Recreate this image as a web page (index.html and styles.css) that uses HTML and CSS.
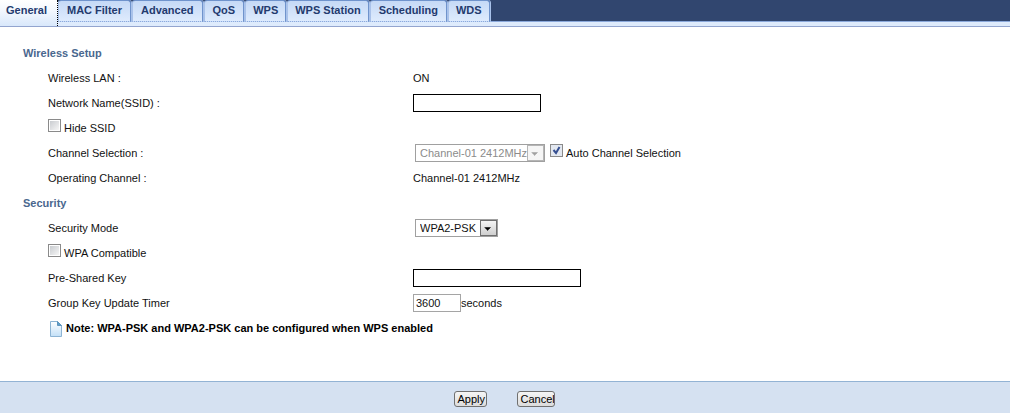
FILE: index.html
```
<!DOCTYPE html>
<html lang="en">
<head>
<meta charset="utf-8">
<title>Wireless LAN - General</title>
<link rel="stylesheet" href="styles.css">
</head>
<body>
<nav class="tabs">
<a class="tab current" href="#general">General</a>
<a class="tab" href="#macfilter">MAC Filter</a>
<a class="tab" href="#advanced">Advanced</a>
<a class="tab" href="#qos">QoS</a>
<a class="tab narrow" href="#wps">WPS</a>
<a class="tab narrow" href="#station">WPS Station</a>
<a class="tab" href="#scheduling">Scheduling</a>
<a class="tab narrow" href="#wds">WDS</a>
</nav>
<form class="page">
<div class="content">
<h2>Wireless Setup</h2>
<div class="row"><span class="name">Wireless LAN :</span><span>ON</span></div>
<div class="row"><label class="name" for="ssid">Network Name(SSID) :</label><input class="text ssid" id="ssid" type="text"></div>
<div class="row"><input class="check" id="hide" type="checkbox"><label for="hide">Hide SSID</label></div>
<div class="row">
<label class="name" for="channel">Channel Selection :</label>
<span class="drop off">
<select class="channel" id="channel" disabled><option>Channel-01 2412MHz</option></select>
<svg class="arrow" width="17" height="16" viewBox="0 0 17 16"><path d="M4 7h7v1h-1v1h-1v1h-1v1h-1v-1h-1v-1h-1v-1h-1z"/></svg>
</span>
<input class="check" id="auto" type="checkbox" checked><label for="auto">Auto Channel Selection</label>
</div>
<div class="row"><span class="name">Operating Channel :</span><span>Channel-01 2412MHz</span></div>
<h2>Security</h2>
<div class="row">
<label class="name" for="mode">Security Mode</label>
<span class="drop">
<select class="mode" id="mode"><option>WPA2-PSK</option></select>
<svg class="arrow" width="17" height="16" viewBox="0 0 17 16"><path d="M4 7h7v1h-1v1h-1v1h-1v1h-1v-1h-1v-1h-1v-1h-1z"/></svg>
</span>
</div>
<div class="row"><input class="check" id="compat" type="checkbox"><label for="compat">WPA Compatible</label></div>
<div class="row"><label class="name" for="key">Pre-Shared Key</label><input class="text key" id="key" type="text"></div>
<div class="row"><label class="name" for="timer">Group Key Update Timer</label><input class="text timer" id="timer" type="text" value="3600"><span>seconds</span></div>
<div class="row note">
<svg width="16" height="16" viewBox="0 0 16 16">
<defs><linearGradient id="paper" x1="0" y1="0" x2="0" y2="1"><stop offset="0" stop-color="#fff"/><stop offset="1" stop-color="#c3e0f7"/></linearGradient></defs>
<path d="M2.5 .5h7l4 4v11h-11z" fill="url(#paper)" stroke="#8db4d4"/>
<path d="M9.5 .5v4h4z" fill="#5f9fcb" stroke="#5f95bd"/>
</svg>
<strong>Note: WPA-PSK and WPA2-PSK can be configured when WPS enabled</strong>
</div>
</div>
<div class="footer">
<button class="btn" type="submit">Apply</button>
<button class="btn cancel" type="reset">Cancel</button>
</div>
</form>
</body>
</html>
```
FILE: styles.css
```
* {box-sizing:border-box}
body {
margin:0;
min-height:100vh;
display:flex;flex-direction:column;
background:#fff;
color:#111;
font:11px/15px "Liberation Sans",Arial,sans-serif;
}
/* tab bar */
.tabs {
display:flex;
height:27px;
background:linear-gradient(#31466f,#31466f 21px,#8ba9dc 21px,#8ba9dc 22px,#deebfc 22px);
border-bottom:1px solid #93a5cf;
}
.tab {
height:22px;
padding:2px 8px 0;
border:1px solid #6f93cc;
border-left-color:#a9c2ea;
border-bottom:1px dotted #8ba9dc;
border-radius:3px 3px 0 0;
box-shadow:1px 0 #a9c2ea;
margin-right:1px;
background:linear-gradient(#c5d9f6,#deebfd);
color:#233a6e;
font-weight:bold;
line-height:14px;
text-decoration:none;
white-space:nowrap;
}
.narrow {padding:2px 7px 0}
.tab.current {
height:26px;
padding:3px 10px 0 6px;
border:0;
border-right:1px dotted #000;
border-radius:0;
box-shadow:none;
margin-right:0;
background:linear-gradient(#fff,#f4f8fe 10px,#d9e8fb);
}
/* form */
.page {
flex:1;
display:flex;flex-direction:column;
}
.content {flex:1;padding:14px 0 0 48px}
h2 {
margin:0 0 0 -25px;
font-size:11px;
line-height:25px;
color:#4a678e;
}
.row {
display:flex;align-items:center;
height:25px;
white-space:nowrap;
}
.name {width:365px}
.text {
height:18px;
margin:0 0 1px;
padding:0 2px;
border:1px solid #000;
border-radius:0;
background:#fff;
color:#111;
font:inherit;
}
.ssid {width:128px}
.key {width:168px}
.timer {width:48px;border-color:#a5a5a5}
.check {
appearance:none;
width:13px;height:13px;
margin:0 3px 6px 0;
border:1px solid #8a8a8a;
background:linear-gradient(135deg,#c9ccd0,#f6f6f6) content-box;
padding:1px;
}
.check:checked {
background:url("data:image/svg+xml,%3Csvg xmlns='http://www.w3.org/2000/svg' viewBox='0 0 13 13'%3E%3Cpath d='M3.5 6l2.5 3L9.500 3' fill='none' stroke='%23354f91' stroke-width='2'/%3E%3C/svg%3E") border-box,#e3e8f0;
}
.drop {
display:flex;
position:relative;
margin:0 5px 1px 2px;
}
.drop select {
appearance:none;
height:18px;
padding:0 17px 0 4px;
border:1px solid #a0a0a0;
border-radius:0;
background:#fff;
color:#111;
font:inherit;
opacity:1;
}
.drop .channel {width:130px;color:#8b8b8b}
.drop .mode {width:83px}
/* drop-down button lies over the select */
.arrow {
position:absolute;
top:1px;right:1px;
border:1px solid #707070;
background:linear-gradient(#f5f5f5,#cfcfcf);
fill:#000;
pointer-events:none;
}
.off .arrow {border-color:#b5b5b5;background:#f5f5f5;fill:#a0a0a0}
.note {gap:2px;color:#000}
/* buttons */
.footer {
display:flex;justify-content:center;
gap:30px;
height:32px;
padding:9px 2px 0 0;
border-top:1px solid #93b3d4;
background:#d5e1f1;
}
.btn {
width:33px;height:16px;
padding:0 0 0 3px;
border:1px solid #707070;
border-radius:3px;
background:linear-gradient(#f5f5f5,#dcdcdc);
color:#000;
font:inherit;
line-height:14px;
text-align:left;
white-space:nowrap;
overflow:hidden;
}
.cancel {width:38px}
```
